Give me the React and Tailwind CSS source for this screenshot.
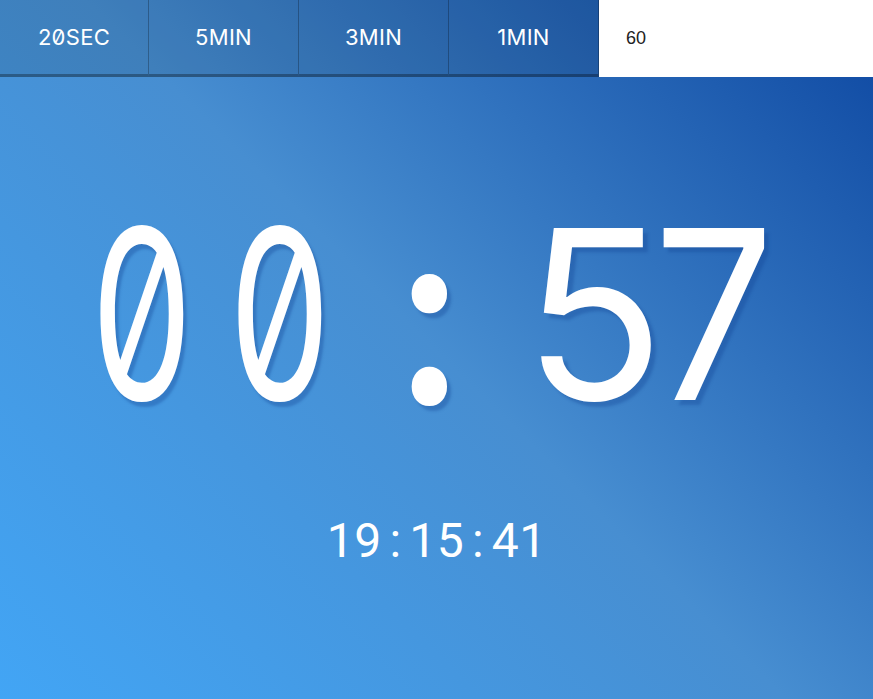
const buttons = ['20SEC', '5MIN', '3MIN', '1MIN'];
const clock = ['1', '9', ':', '1', '5', ':', '4', '1'];

export default function App() {
  return (
    <div className="h-[699px] w-full overflow-hidden bg-[linear-gradient(45deg,#42a5f5,#478ed1_50%,#0d47a1)] font-['Inter',sans-serif] text-white">
      <div className="flex h-[77px]">
        {buttons.map((b, i) => (
          <button
            key={b}
            className={`flex h-[77px] items-center justify-center border-r border-b-[3px] border-r-black/25 border-b-black/30 bg-black/10 pb-[1px] text-[22px] leading-none tracking-[0.3px] text-white [font-variant-numeric:slashed-zero] ${i === 0 ? 'w-[149px]' : 'w-[150px]'}`}
          >
            {b}
          </button>
        ))}
        <div className="flex h-[77px] flex-1 items-center bg-white pl-[27px] font-['Liberation_Sans',sans-serif] text-[18px] text-[#222]">
          60
        </div>
      </div>
      <div className="flex flex-col">
        <div className="mt-[136px] flex h-[200px] items-center pl-[65px] text-[237px] font-normal leading-none [font-variant-numeric:slashed-zero_tabular-nums] [text-shadow:5px_5px_3px_rgba(20,70,150,0.35)]">
          <span className="inline-block w-[138px] text-center">
            <span className="inline-block scale-x-[0.685]">0</span>
          </span>
          <span className="inline-block w-[138px] text-center">
            <span className="inline-block scale-x-[0.685]">0</span>
          </span>
          <span className="inline-block w-[178px] text-center font-['Roboto',sans-serif] font-black">
            <span className="inline-block translate-y-[11px] scale-x-[0.82]">:</span>
          </span>
          <span className="inline-block w-[100px] text-center">
            <span className="inline-block scale-x-[0.98]">5</span>
          </span>
          <span className="inline-block w-[190px] text-center">
            <span className="inline-block scale-x-[0.9]">7</span>
          </span>
        </div>
        <div className="mt-[104px] flex justify-center font-['Roboto',sans-serif] text-[48px] leading-none [font-variant-numeric:tabular-nums]">
          {clock.map((c, i) => (
            <span key={i} className="inline-block w-[27.5px] text-center">
              {c}
            </span>
          ))}
        </div>
      </div>
    </div>
  );
}
